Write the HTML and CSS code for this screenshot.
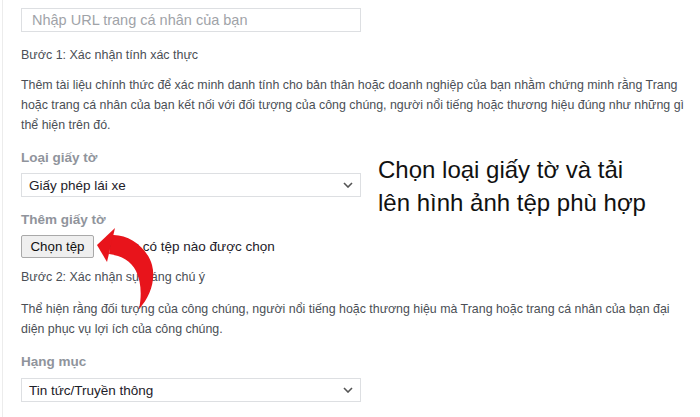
FILE: index.html
```html
<!DOCTYPE html>
<html lang="vi">
<head>
<meta charset="utf-8">
<link rel="stylesheet" href="styles.css">
</head>
<body>
<div class="page">
  <div class="form">
    <div class="input">Nhập URL trang cá nhân của bạn</div>
    <p class="step">Bước 1: Xác nhận tính xác thực</p>
    <p class="para">Thêm tài liệu chính thức để xác minh danh tính cho bản thân hoặc doanh nghiệp của bạn nhằm chứng minh rằng Trang hoặc trang cá nhân của bạn kết nối với đối tượng của công chúng, người nổi tiếng hoặc thương hiệu đúng như những gì thể hiện trên đó.</p>
    <div class="split">
      <div class="fields">
        <div class="label">Loại giấy tờ</div>
        <div class="select">
          <span>Giấy phép lái xe</span>
          <svg class="chev" width="10" height="6" viewBox="0 0 10 6"><path d="M1 1 L5 5 L9 1" fill="none" stroke="#555" stroke-width="1.6"/></svg>
        </div>
        <div class="label label-2">Thêm giấy tờ</div>
        <div class="file">
          <span class="btn">Chọn tệp</span>
          <span class="none">Không có tệp nào được chọn</span>
        </div>
      </div>
      <div class="callout">Chọn loại giấy tờ và tải<br>lên hình ảnh tệp phù hợp</div>
    </div>
    <p class="step step-2">Bước 2: Xác nhận sự đáng chú ý</p>
    <p class="para para-2">Thể hiện rằng đối tượng của công chúng, người nổi tiếng hoặc thương hiệu mà Trang hoặc trang cá nhân của bạn đại diện phục vụ lợi ích của công chúng.</p>
    <div class="label label-3">Hạng mục</div>
    <div class="select select-2">
      <span>Tin tức/Truyền thông</span>
      <svg class="chev" width="10" height="6" viewBox="0 0 10 6"><path d="M1 1 L5 5 L9 1" fill="none" stroke="#555" stroke-width="1.6"/></svg>
    </div>
  </div>
  <svg class="arrow" width="70" height="90" viewBox="0 0 70 90">
    <path d="M22 10 C 38 9, 57 22, 62 40 C 66 55, 60 72, 49 84 C 52 70, 51 56, 46 46 C 41 36, 32 31, 19 29 Z" fill="#e8141b"/>
    <path d="M7 20 L 25 3 L 17 37 Z" fill="#e8141b"/>
  </svg>
</div>
</body>
</html>
```
FILE: styles.css
```css
html, body {
  margin: 0;
  padding: 0;
  background: #fff;
}
.page {
  position: relative;
  width: 700px;
  height: 417px;
  overflow: hidden;
  font-family: "Liberation Sans", Arial, sans-serif;
  color: #4b4f56;
}
.form {
  margin-left: 2px;
  border-left: 1px solid #ececec;
  padding: 8px 0 0 18px;
  height: 417px;
  box-sizing: border-box;
}
.input {
  width: 340px;
  height: 24px;
  box-sizing: border-box;
  border: 1px solid #dddfe2;
  padding: 0 10px;
  font-size: 14.5px;
  line-height: 22px;
  color: #a0a3a8;
}
.step {
  margin: 13px 0 0;
  font-size: 12.5px;
  line-height: 20px;
}
.para {
  margin: 10px 0 0;
  width: 672px;
  font-size: 12.4px;
  line-height: 20px;
}
.split {
  display: flex;
  margin-top: 14px;
}
.fields {
  width: 340px;
  flex: none;
}
.label {
  font-size: 13.5px;
  font-weight: bold;
  line-height: 18px;
  color: #90949c;
}
.label-2 {
  margin-top: 14px;
}
.select {
  margin-top: 6px;
  height: 24px;
  width: 340px;
  box-sizing: border-box;
  border: 1px solid #dddfe2;
  display: flex;
  align-items: center;
  justify-content: space-between;
  padding: 0 7px 0 7px;
  font-size: 13.5px;
  color: #1d2129;
}
.chev {
  display: block;
}
.file {
  margin-top: 6px;
  display: flex;
  align-items: center;
  gap: 6px;
  font-size: 13.5px;
  color: #1d2129;
}
.btn {
  display: inline-block;
  height: 23px;
  width: 73px;
  box-sizing: border-box;
  border: 1px solid #a9a9a9;
  border-radius: 2px;
  background: #efefef;
  text-align: center;
  line-height: 21px;
  font-size: 13.3px;
  color: #111;
}
.callout {
  margin: 4px 0 0 17px;
  font-size: 24px;
  line-height: 33px;
  color: #111;
  white-space: nowrap;
}
.step-2 {
  margin-top: 9px;
}
.para-2 {
  margin-top: 12px;
}
.label-3 {
  margin-top: 14px;
}
.select-2 {
  margin-top: 7px;
}
.arrow {
  position: absolute;
  left: 90px;
  top: 225px;
}
```
